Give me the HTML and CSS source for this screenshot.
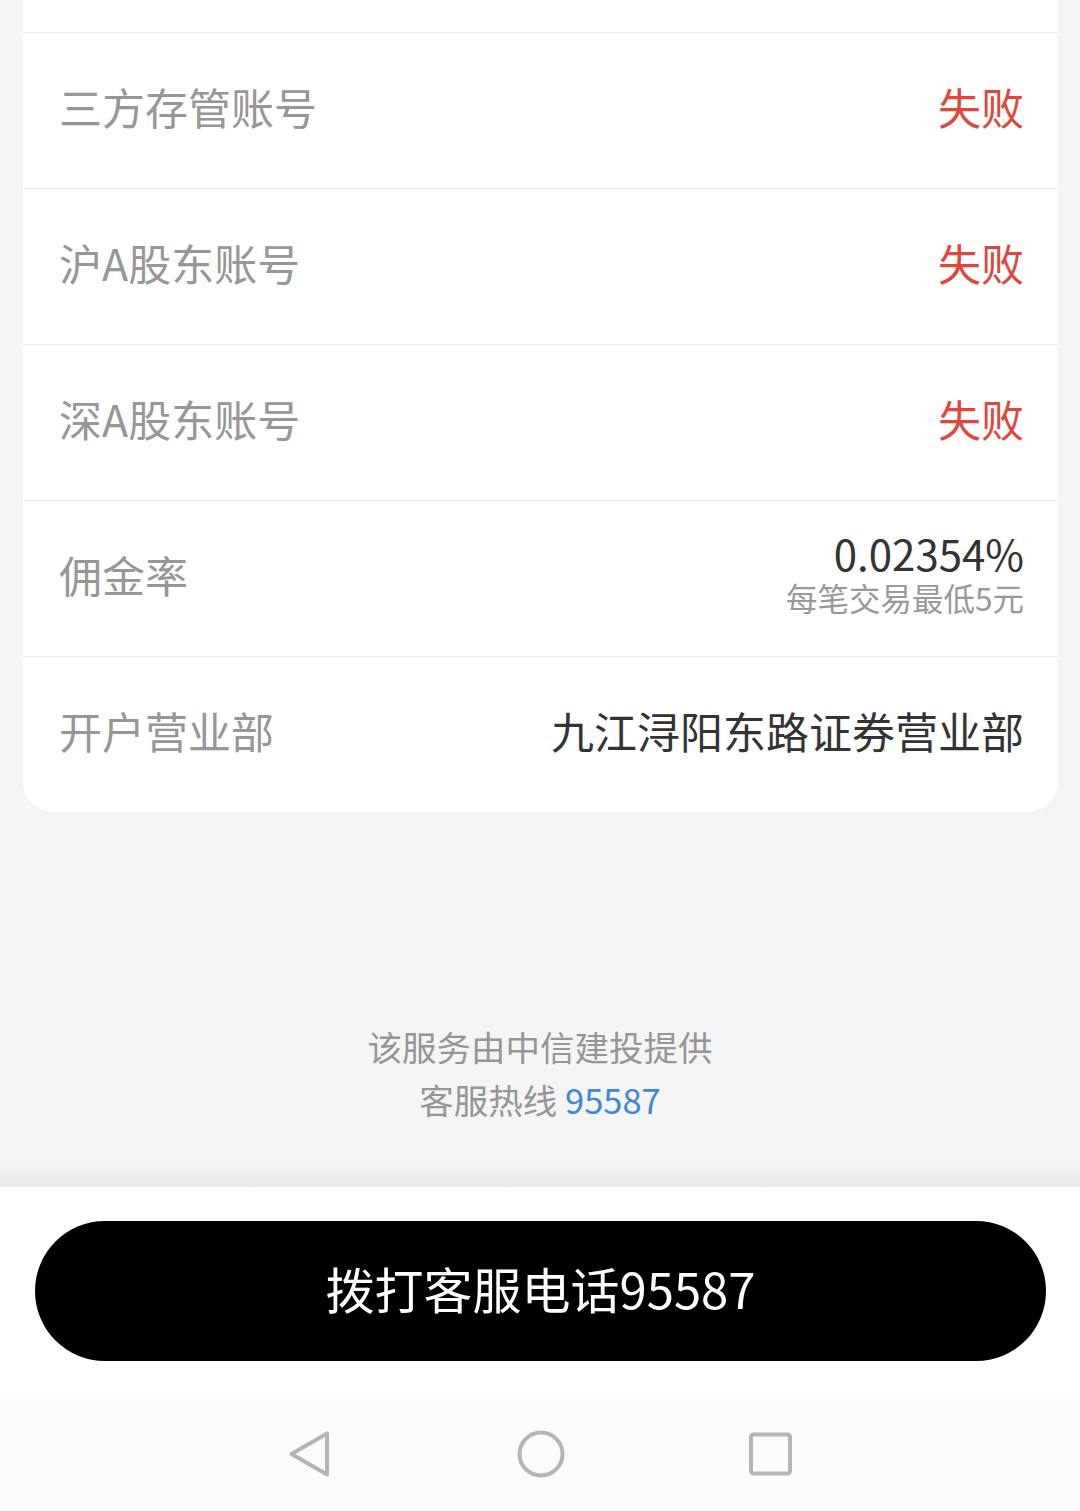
FILE: index.html
```html
<!DOCTYPE html>
<html lang="zh-CN">
<head>
<meta charset="utf-8">
<title>账户信息</title>
<link rel="stylesheet" href="styles.css">
</head>
<body>
<div class="page">
  <div class="card-wrap">
    <div class="card">
      <div class="card-top"></div>
      <div class="row">
        <span class="label">三方存管账号</span>
        <span class="value fail">失败</span>
      </div>
      <div class="row">
        <span class="label">沪A股东账号</span>
        <span class="value fail">失败</span>
      </div>
      <div class="row">
        <span class="label">深A股东账号</span>
        <span class="value fail">失败</span>
      </div>
      <div class="row">
        <span class="label">佣金率</span>
        <div class="value-stack">
          <span class="value dark rate">0.02354%</span>
          <span class="sub">每笔交易最低5元</span>
        </div>
      </div>
      <div class="row">
        <span class="label">开户营业部</span>
        <span class="value dark">九江浔阳东路证券营业部</span>
      </div>
    </div>
  </div>
  <div class="footer-info">
    <p class="info-line">该服务由中信建投提供</p>
    <p class="info-line">客服热线 <span class="phone">95587</span></p>
  </div>
  <div class="action-bar">
    <button class="call-btn">拨打客服电话95587</button>
  </div>
  <div class="nav-bar">
    <svg class="nav-icon" viewBox="0 0 48 48" width="48" height="48">
      <path d="M40 3.5 L40 44.5 L4.5 24 Z" fill="none" stroke="#b5b5b5" stroke-width="4" stroke-linejoin="round"/>
    </svg>
    <svg class="nav-icon" viewBox="0 0 48 48" width="48" height="48">
      <circle cx="24" cy="24" r="21.5" fill="none" stroke="#b5b5b5" stroke-width="4"/>
    </svg>
    <svg class="nav-icon" viewBox="0 0 48 48" width="48" height="48">
      <rect x="4" y="4.5" width="39" height="39" rx="2.5" fill="none" stroke="#b5b5b5" stroke-width="4"/>
    </svg>
  </div>
</div>
</body>
</html>
```

FILE: styles.css
```css
* {
  box-sizing: border-box;
}

html, body {
  margin: 0;
  padding: 0;
}

body {
  background: #f5f5f5;
  font-family: "Noto Sans CJK SC", "Noto Sans", sans-serif;
}

.page {
  width: 1080px;
  height: 1511px;
  display: flex;
  flex-direction: column;
  overflow: hidden;
}

.card-wrap {
  padding: 0 22px 0 23px;
}

.card {
  background: #ffffff;
  border-radius: 0 0 30px 30px;
}

.card-top {
  height: 32px;
}

.row {
  height: 156px;
  border-top: 1px solid #ececec;
  display: flex;
  align-items: center;
  justify-content: space-between;
  padding: 0 34px 8px 36px;
}

.label {
  font-size: 43px;
  color: #979797;
  line-height: 1;
}

.value {
  font-size: 43px;
  line-height: 1;
}

.fail {
  color: #e0473a;
}

.dark {
  color: #333333;
}

.value-stack {
  display: flex;
  flex-direction: column;
  align-items: flex-end;
  margin-top: -2px;
}

.rate {
  font-size: 42px;
  line-height: 46px;
}

.sub {
  font-size: 31.5px;
  line-height: 42px;
  color: #999999;
}

.footer-info {
  height: 375px;
  padding-top: 208px;
  display: flex;
  flex-direction: column;
  align-items: center;
  background: linear-gradient(to bottom, #f5f5f5 0, #f5f5f5 346px, #ebebeb 375px);
}

.info-line {
  margin: 0;
  font-size: 34.5px;
  line-height: 53px;
  color: #969696;
}

.phone {
  color: #3d87dc;
}

.action-bar {
  height: 210px;
  background: #ffffff;
  padding: 34px 34px 0 35px;
}

.call-btn {
  display: block;
  width: 100%;
  height: 140px;
  border: none;
  border-radius: 70px;
  background: #000000;
  color: #ffffff;
  font-family: "Noto Sans CJK SC", "Noto Sans", sans-serif;
  font-size: 49px;
  padding: 0 0 8px 0;
}

.nav-bar {
  flex: 1;
  background: #fcfcfc;
  display: flex;
  align-items: center;
  justify-content: center;
  gap: 182px;
  padding-left: 2px;
}

.nav-icon {
  display: block;
}
```
